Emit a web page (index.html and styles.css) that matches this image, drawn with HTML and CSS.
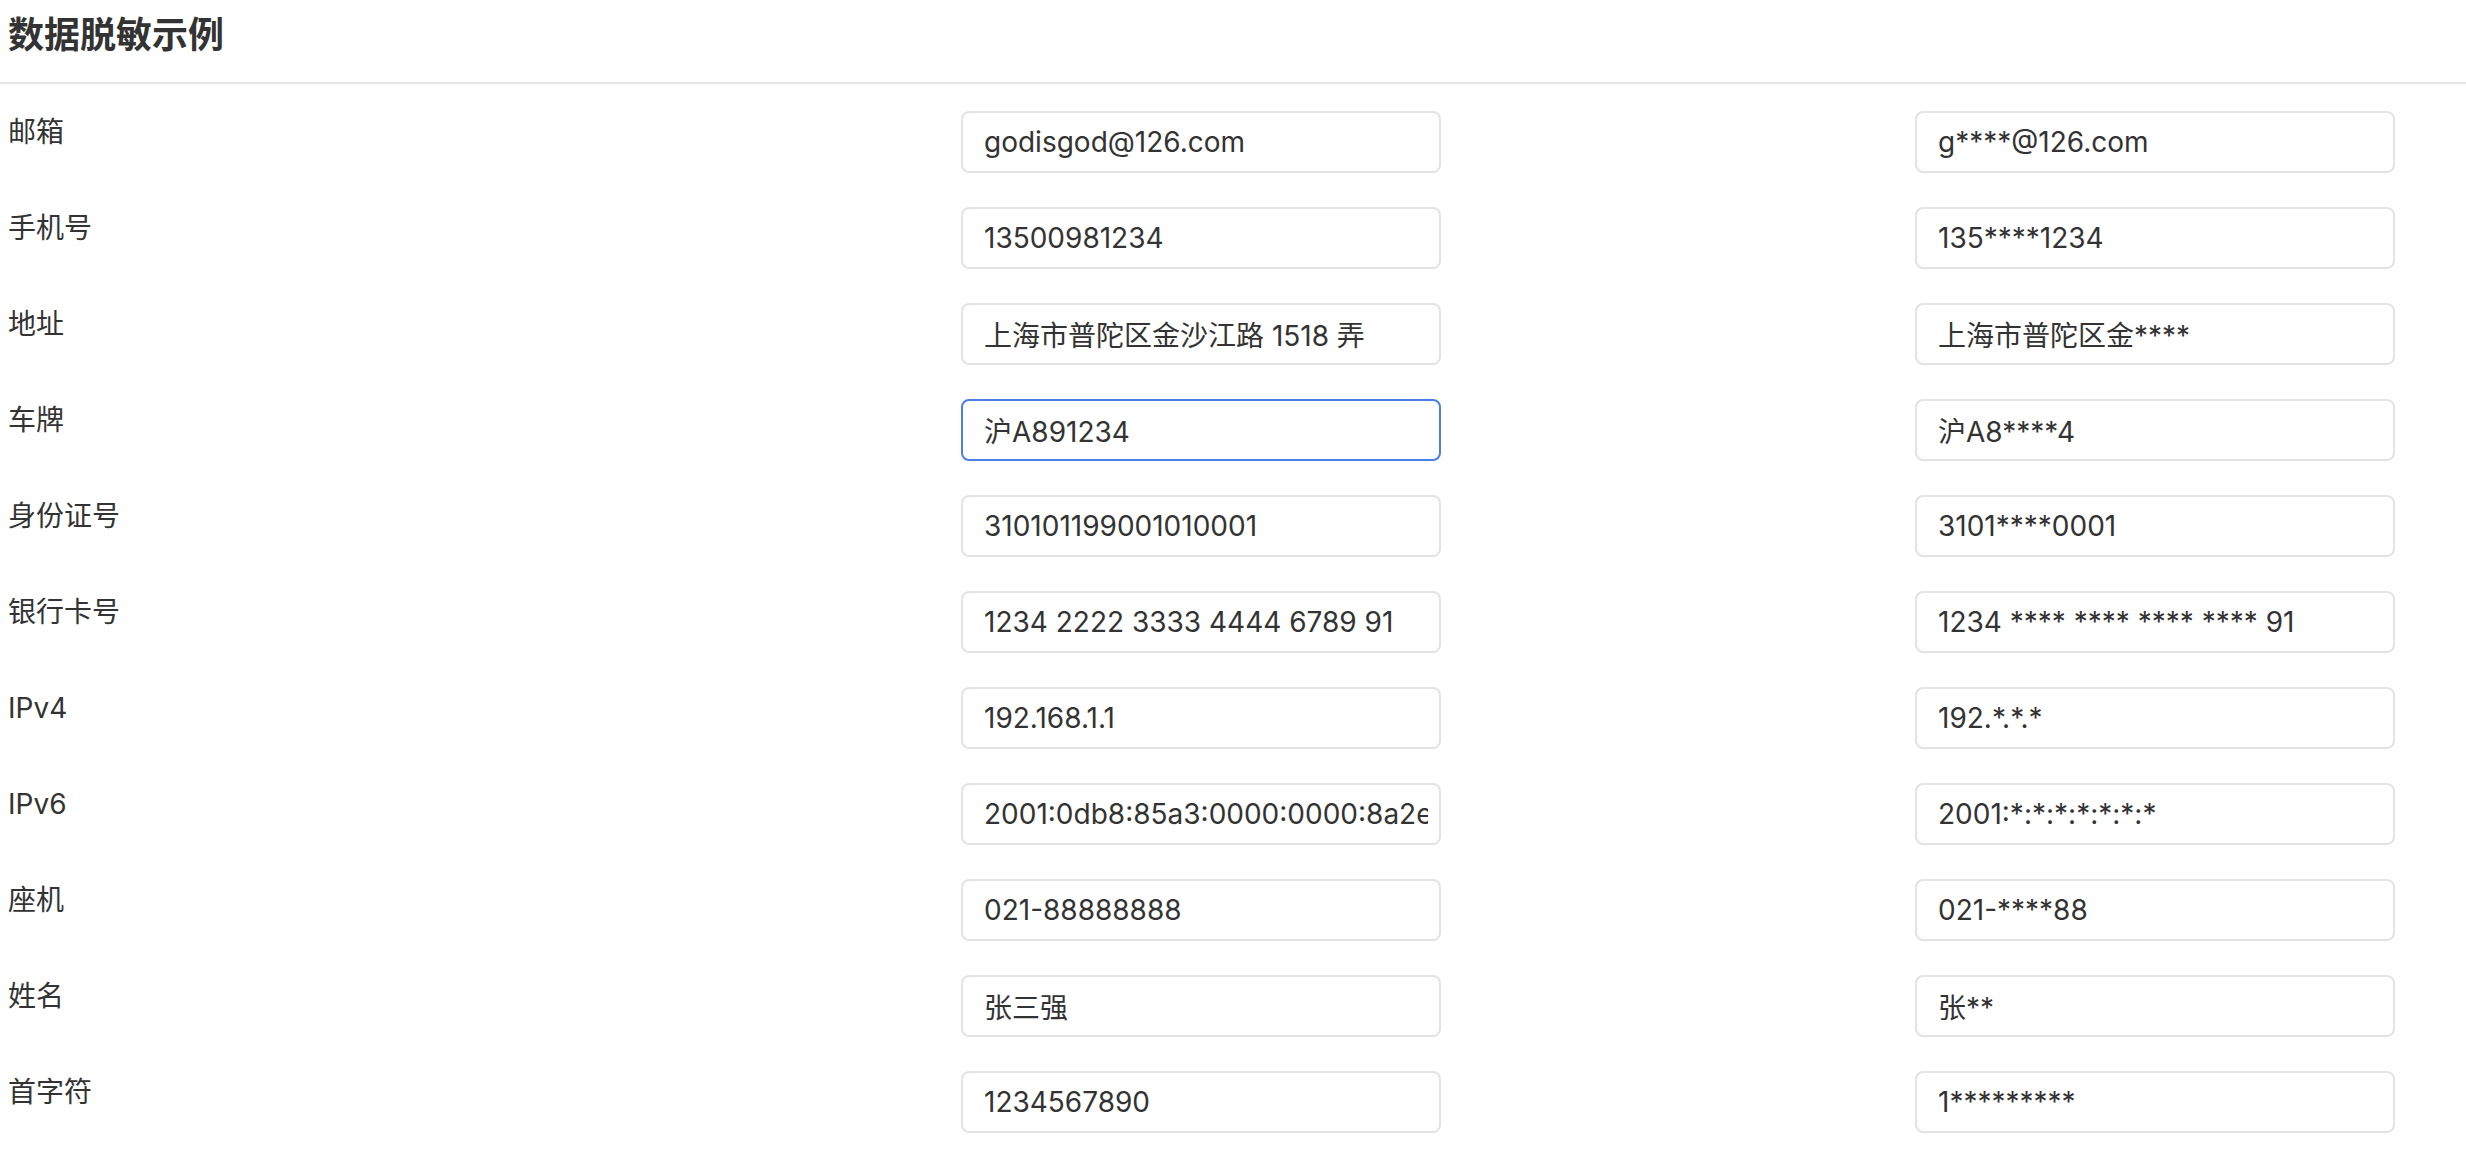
FILE: index.html
```html
<!DOCTYPE html>
<html lang="zh-CN">
<head>
<meta charset="utf-8">
<title>数据脱敏示例</title>
<link rel="stylesheet" href="styles.css">
</head>
<body>
<header class="page-header">
  <h1 class="page-title">数据脱敏示例</h1>
</header>
<main class="mask-table">
  <div class="row">
    <div class="label">邮箱</div>
    <div class="cell"><input class="field" type="text" value="godisgod@126.com"></div>
    <div class="cell"><input class="field" type="text" value="g****@126.com"></div>
  </div>
  <div class="row">
    <div class="label">手机号</div>
    <div class="cell"><input class="field" type="text" value="13500981234"></div>
    <div class="cell"><input class="field" type="text" value="135****1234"></div>
  </div>
  <div class="row">
    <div class="label">地址</div>
    <div class="cell"><input class="field" type="text" value="上海市普陀区金沙江路 1518 弄"></div>
    <div class="cell"><input class="field" type="text" value="上海市普陀区金****"></div>
  </div>
  <div class="row">
    <div class="label">车牌</div>
    <div class="cell"><input class="field is-focused" type="text" value="沪A891234"></div>
    <div class="cell"><input class="field" type="text" value="沪A8****4"></div>
  </div>
  <div class="row">
    <div class="label">身份证号</div>
    <div class="cell"><input class="field" type="text" value="310101199001010001"></div>
    <div class="cell"><input class="field" type="text" value="3101****0001"></div>
  </div>
  <div class="row">
    <div class="label">银行卡号</div>
    <div class="cell"><input class="field" type="text" value="1234 2222 3333 4444 6789 91"></div>
    <div class="cell"><input class="field" type="text" value="1234 **** **** **** **** 91"></div>
  </div>
  <div class="row">
    <div class="label">IPv4</div>
    <div class="cell"><input class="field" type="text" value="192.168.1.1"></div>
    <div class="cell"><input class="field" type="text" value="192.*.*.*"></div>
  </div>
  <div class="row">
    <div class="label">IPv6</div>
    <div class="cell"><input class="field" type="text" value="2001:0db8:85a3:0000:0000:8a2e:0370:7334"></div>
    <div class="cell"><input class="field" type="text" value="2001:*:*:*:*:*:*:*"></div>
  </div>
  <div class="row">
    <div class="label">座机</div>
    <div class="cell"><input class="field" type="text" value="021-88888888"></div>
    <div class="cell"><input class="field" type="text" value="021-****88"></div>
  </div>
  <div class="row">
    <div class="label">姓名</div>
    <div class="cell"><input class="field" type="text" value="张三强"></div>
    <div class="cell"><input class="field" type="text" value="张**"></div>
  </div>
  <div class="row">
    <div class="label">首字符</div>
    <div class="cell"><input class="field" type="text" value="1234567890"></div>
    <div class="cell"><input class="field" type="text" value="1*********"></div>
  </div>
</main>
</body>
</html>
```
FILE: styles.css
```css
* {
  box-sizing: border-box;
}

html, body {
  margin: 0;
  padding: 0;
  background: #ffffff;
}

body {
  font-family: "Inter", "Noto Sans CJK SC", sans-serif;
  color: #333333;
  font-size: 28px;
  overflow: hidden;
}

.page-header {
  padding: 8px 8px 20px;
  border-bottom: 2px solid #e5e5e5;
}

.page-title {
  margin: 0;
  font-size: 36px;
  line-height: 54px;
  font-weight: 700;
  color: #333333;
}

.mask-table {
  padding: 27px 8px 0;
  display: flex;
  flex-direction: column;
  gap: 34px;
}

.row {
  display: grid;
  grid-template-columns: 953px 954px 1fr;
  align-items: start;
}

.label {
  font-size: 28px;
  line-height: 42px;
  color: #333333;
}

.cell {
  display: flex;
}

.field {
  width: 480px;
  height: 62px;
  padding: 0 11px 0 21px;
  border: 2px solid #e3e3e3;
  border-radius: 8px;
  background: #ffffff;
  font-family: "Inter", "Noto Sans CJK SC", sans-serif;
  font-size: 28px;
  color: #333333;
  outline: none;
}

.field.is-focused {
  border-color: #4a7fe8;
}
```
